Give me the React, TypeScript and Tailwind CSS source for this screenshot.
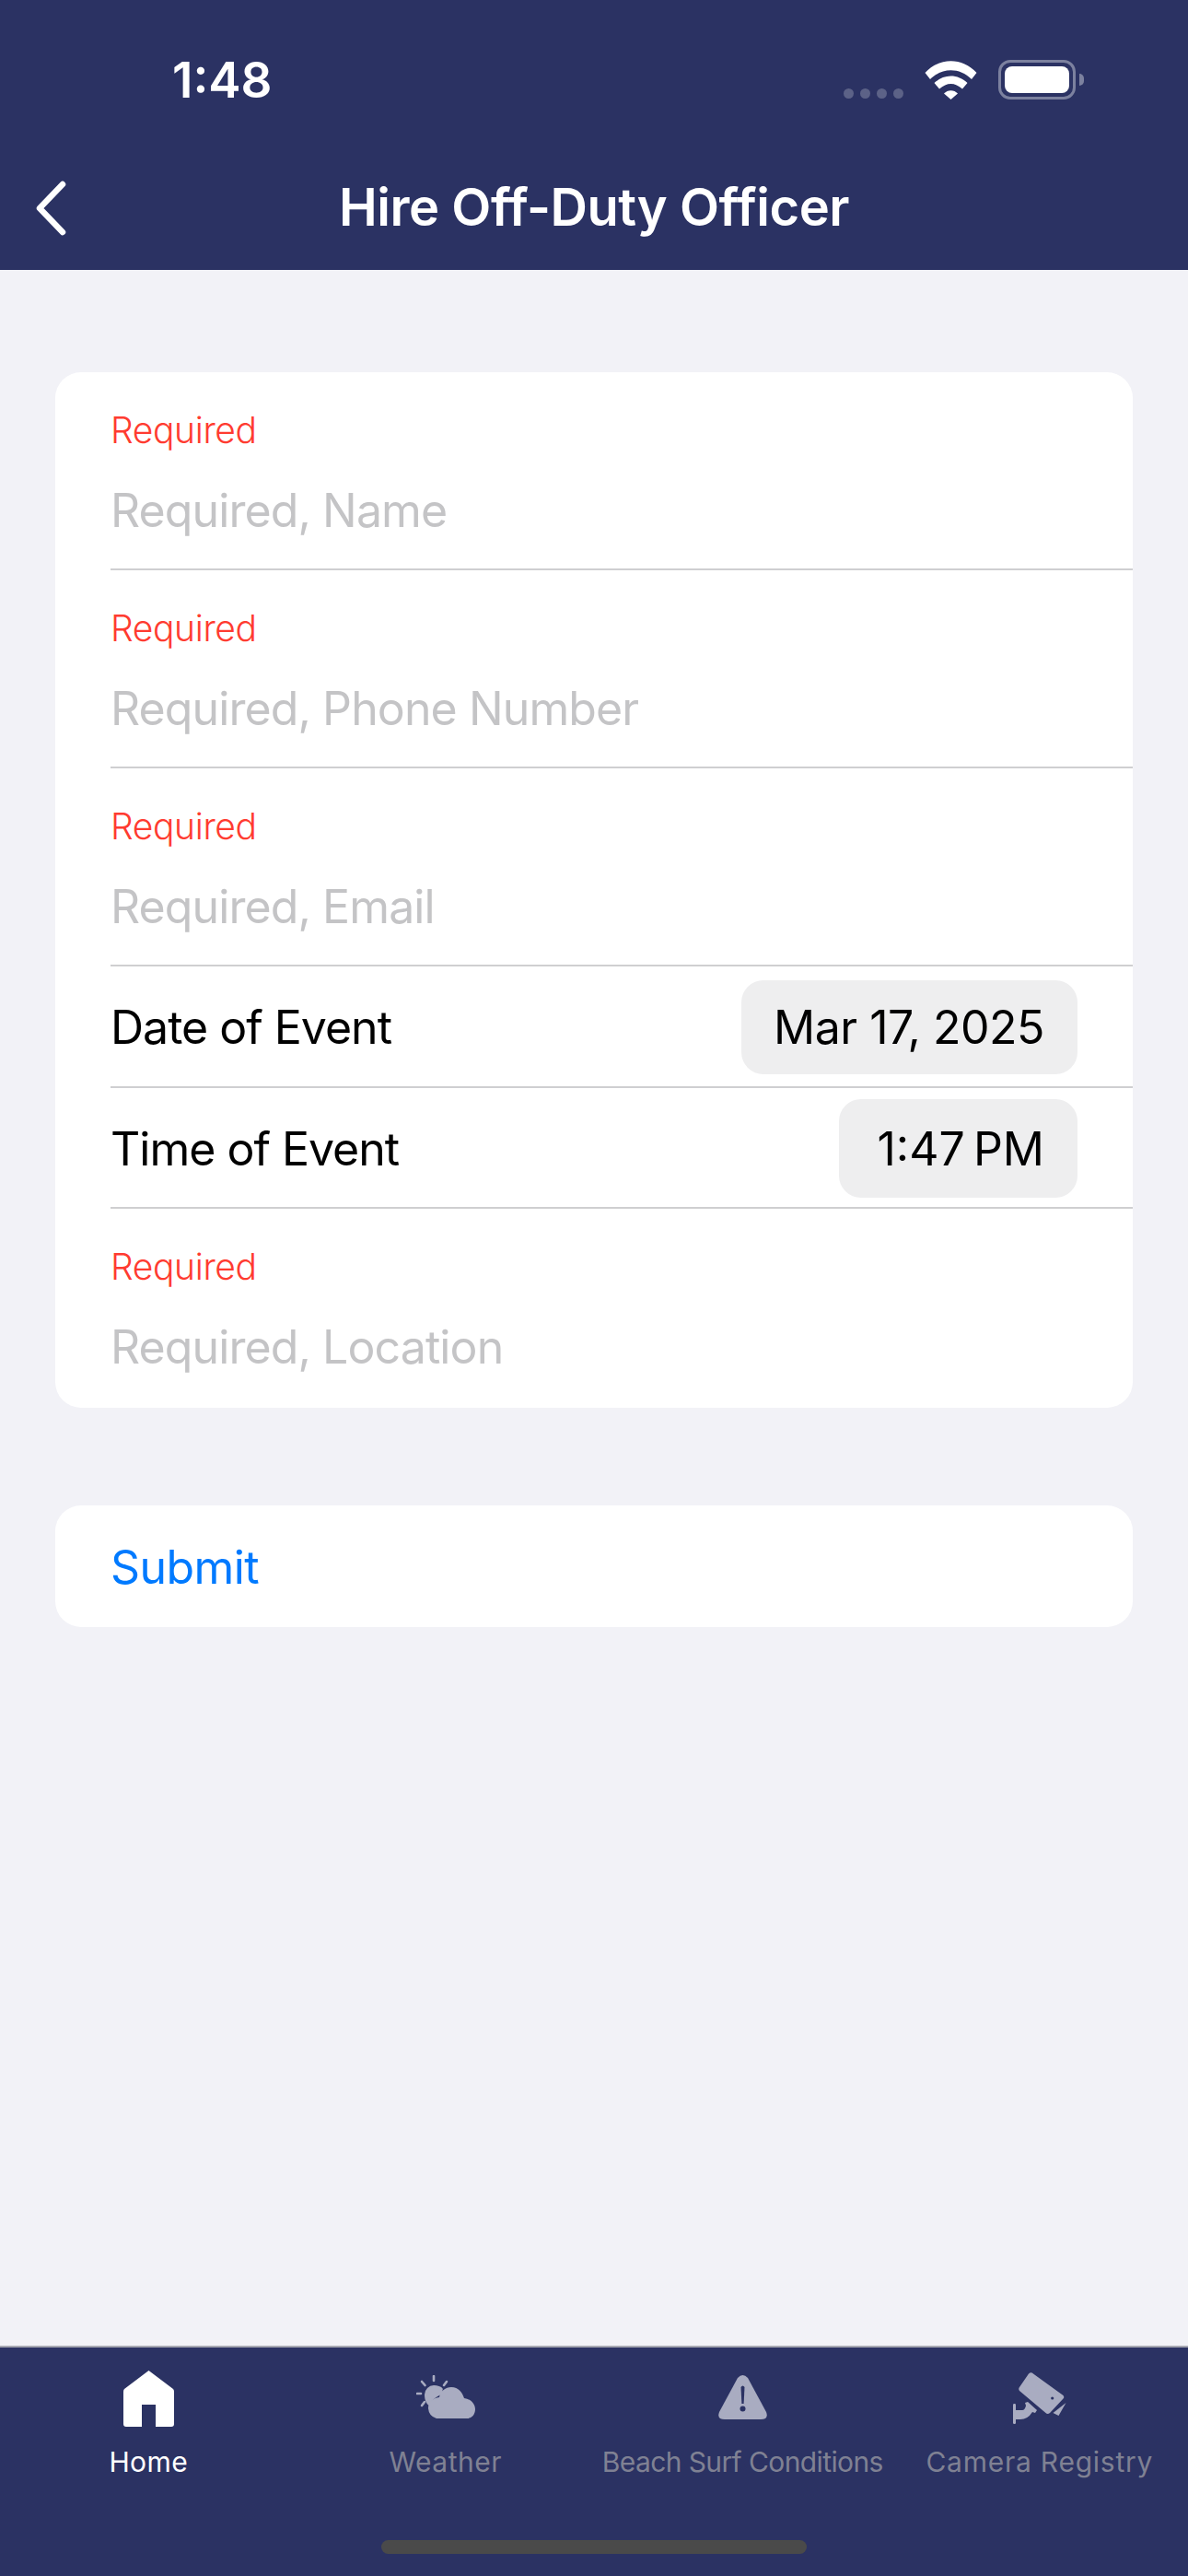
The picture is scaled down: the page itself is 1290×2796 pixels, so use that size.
import React from 'react';

const RequiredField: React.FC<{ placeholder: string; last?: boolean }> = ({ placeholder, last }) => (
  <div className={`ml-[60px] flex flex-col ${last ? 'h-[216px]' : 'h-[215px] border-b-[2px] border-[#cfcfd1]'}`}>
    <span className="mt-[37px] h-[52px] leading-[52px] text-[39px] tracking-[-0.4px] font-light text-[#ff3b30]">Required</span>
    <span className="mt-[27px] h-[68px] leading-[68px] text-[50px] tracking-[-0.9px] text-[#c4c4c6]">{placeholder}</span>
  </div>
);

const PickerRow: React.FC<{ label: string; value: string; pillClass: string; rowClass: string }> = ({
  label,
  value,
  pillClass,
  rowClass,
}) => (
  <div className={`ml-[60px] pr-[60px] flex items-center justify-between border-b-[2px] border-[#cfcfd1] ${rowClass}`}>
    <span className="pt-[3px] text-[50px] tracking-[-1px] text-black">{label}</span>
    <span className={`mt-[2px] flex items-center justify-end pr-[36px] pt-[1px] rounded-[24px] bg-[#eeeeef] text-[50px] text-black ${pillClass}`}>
      {value}
    </span>
  </div>
);

const HomeIcon = () => (
  <svg width="55" height="61" viewBox="0 0 55 61" fill="#ffffff">
    <path d="M27.5 0 L54 20 Q55 21 55 23 V58 Q55 61 52 61 H35 V37 H20 V61 H3 Q0 61 0 58 V23 Q0 21 1 20 Z" />
  </svg>
);

const WeatherIcon = () => (
  <svg width="64" height="48" viewBox="0 0 64 48" fill="#a9acc1">
    <path d="M19 11 A10.5 10.5 0 0 0 9 21 C9 27 11 31 14 33 L17 29 C19 25 23 23 27 21 C29 19 28 16 29 15 C27 12 23 11 19 11 Z" />
    <path d="M22 47 A12.5 12.5 0 0 1 13 36 C13 29 18 25 25 24 C26 17 32 13 38 13 C46 13 50 19 52 25 C59 26 64 31 64 37 C64 43 60 47 55 47 Z" />
    <g fill="none" stroke="#a9acc1" strokeWidth="2.6" strokeLinecap="round">
      <path d="M19 1 V6" />
      <path d="M6 7 L9.5 11" />
      <path d="M33 7 L30 11" />
      <path d="M1 20 H5" />
      <path d="M6 33 L9 29" />
    </g>
  </svg>
);

const WarningIcon = () => (
  <svg width="53" height="48" viewBox="0 0 53 48">
    <path d="M21 3 Q26.5 -3 32 3 L52 40 Q55 48 46 48 H7 Q-2 48 1 40 Z" fill="#a9acc1" />
    <path d="M24.5 13 Q26.5 10 28.5 13 L27.6 31 H25.4 Z" fill="#2b3263" />
    <circle cx="26.5" cy="36.5" r="3" fill="#2b3263" />
  </svg>
);

const CameraIcon = () => (
  <svg width="58" height="56" viewBox="0 0 58 56" fill="#a9acc1">
    <path d="M17 1.5 Q19.5 -1 22 1.5 L54.5 25 Q56 27 54.5 28.5 L40 44 Q37.5 46 35.5 44 L7 20 Q5.5 18 7 16 Z" />
    <circle cx="42.7" cy="28" r="1.6" fill="#2b3263" />
    <path d="M57.5 33 L49.5 47 L43.5 44 Z" />
    <rect x="0" y="34" width="3" height="22" rx="1.2" />
    <path d="M3 41 H10 Q13 41 14 36 L13 33 L16 32 L26 41 L24 44 L21 43 Q16 51 8 51 H3 Z" />
  </svg>
);

const tabs = [
  { label: 'Home', icon: <HomeIcon />, active: true, iconClass: 'pt-[25px]', textClass: 'tracking-[0.4px]' },
  { label: 'Weather', icon: <WeatherIcon />, active: false, iconClass: 'pt-[30px]', textClass: 'tracking-[0.5px]' },
  { label: 'Beach Surf Conditions', icon: <WarningIcon />, active: false, iconClass: 'pt-[30px]', textClass: 'tracking-[-0.6px]' },
  { label: 'Camera Registry', icon: <CameraIcon />, active: false, iconClass: 'pt-[27px]', textClass: 'tracking-[0.75px]' },
];

export default function App() {
  return (
    <div className="w-[1290px] h-[2796px] flex flex-col bg-[#f2f2f7] font-[Inter,sans-serif] overflow-hidden">
      {/* status bar + nav */}
      <header className="h-[293px] shrink-0 bg-[#2b3263] text-white flex flex-col">
        <div className="h-[176px] pt-[55px] pl-[187px] pr-[122px] flex items-start justify-between">
          <span className="text-[53px] leading-[64px] font-semibold">1:48</span>
          <div className="flex items-end mt-[10px] h-[43px]">
            <div className="flex gap-[7px] mb-[1px]">
              <span className="w-[11px] h-[11px] rounded-full bg-[#5c6287]" />
              <span className="w-[11px] h-[11px] rounded-full bg-[#5c6287]" />
              <span className="w-[11px] h-[11px] rounded-full bg-[#5c6287]" />
              <span className="w-[11px] h-[11px] rounded-full bg-[#5c6287]" />
            </div>
            <svg className="ml-[23px]" width="57" height="42" viewBox="0 0 57 42" fill="#ffffff">
              <path d="M0.5 13 C16 -4 41 -4 56.5 13 L51 20 C38 7 19 7 6 20 Z" />
              <path d="M10.5 24 C21 14 36 14 46.5 24 L41 30.5 C33 23 24 23 16 30.5 Z" />
              <path d="M21 35.5 C25 31 32 31 36 35.5 L28.5 42 Z" />
            </svg>
            <div className="ml-[23px] relative w-[84px] h-[43px] rounded-[13px] border-[3px] border-[#7c819f] p-[4px]">
              <div className="w-full h-full rounded-[8px] bg-white" />
              <span className="absolute right-[-12px] top-[12px] w-[5px] h-[13px] rounded-r-full bg-[#7c819f]" />
            </div>
          </div>
        </div>
        <div className="relative flex-1 flex items-start justify-center">
          <svg className="absolute left-[36px] top-[20px]" width="38" height="60" viewBox="0 0 38 60" fill="none">
            <path d="M32 4 L7 30 L32 56" stroke="#ffffff" strokeWidth="6.5" strokeLinecap="round" strokeLinejoin="round" />
          </svg>
          <span className="mt-[14px] text-[56px] leading-[70px] tracking-[-0.45px] font-semibold">Hire Off-Duty Officer</span>
        </div>
      </header>

      {/* form */}
      <main className="flex-1 px-[60px] pt-[111px]">
        <section className="bg-white rounded-[28px] overflow-hidden">
          <RequiredField placeholder="Required, Name" />
          <RequiredField placeholder="Required, Phone Number" />
          <RequiredField placeholder="Required, Email" />
          <PickerRow label="Date of Event" value="Mar 17, 2025" rowClass="h-[132px]" pillClass="w-[365px] h-[102px] tracking-[-0.5px]" />
          <PickerRow label="Time of Event" value="1:47 PM" rowClass="h-[131px]" pillClass="w-[259px] h-[107px] [word-spacing:-5px]" />
          <RequiredField placeholder="Required, Location" last />
        </section>
        <section className="mt-[106px] h-[132px] bg-white rounded-[28px] flex items-center pl-[60px]">
          <span className="pt-[3px] text-[50px] tracking-[-0.6px] text-[#007aff]">Submit</span>
        </section>
      </main>

      {/* tab bar */}
      <footer className="relative h-[250px] shrink-0 bg-[#2b3263] border-t-[2px] border-[#a6a7b0] grid grid-cols-4">
        {tabs.map((tab) => (
          <div key={tab.label} className="flex flex-col items-center">
            <div className={`h-[86px] flex items-start ${tab.iconClass}`}>{tab.icon}</div>
            <span className={`mt-[20px] text-[30px] leading-[36px] whitespace-nowrap ${tab.textClass} ${tab.active ? 'text-white' : 'text-[#7f8193]'}`}>
              {tab.label}
            </span>
          </div>
        ))}
        <div className="absolute left-[414px] bottom-[24px] w-[462px] h-[15px] rounded-full bg-[#4a4a4a]" />
      </footer>
    </div>
  );
}
